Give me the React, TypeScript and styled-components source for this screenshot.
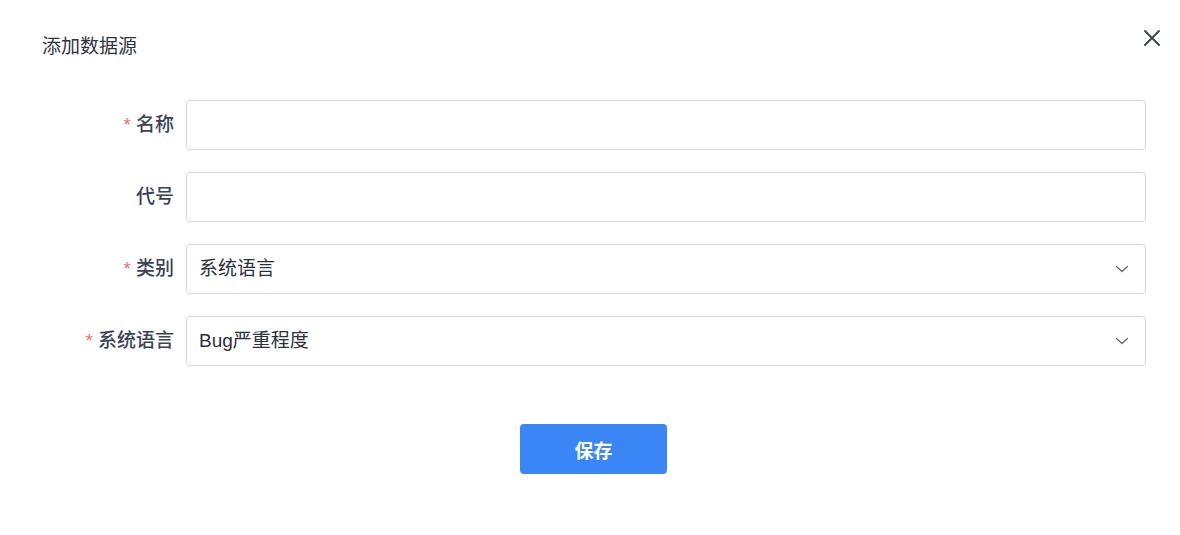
import React from 'react';
import styled, { createGlobalStyle } from 'styled-components';

const GlobalStyle = createGlobalStyle`
  html, body {
    margin: 0;
    padding: 0;
    background: #ffffff;
  }
  body {
    font-family: "Liberation Sans", "Noto Sans CJK SC", sans-serif;
  }
`;

const Dialog = styled.div`
  width: 1180px;
  height: 535px;
  box-sizing: border-box;
  background: #ffffff;
  padding: 0 20px 0 0;
`;

const Header = styled.div`
  display: flex;
  align-items: flex-start;
  justify-content: space-between;
  padding: 34px 0 0 42px;
  height: 66px;
  box-sizing: border-box;
`;

const Title = styled.h2`
  margin: 0;
  font-size: 19px;
  line-height: 26px;
  font-weight: 400;
  color: #2f3440;
`;

const CloseButton = styled.button`
  border: none;
  background: transparent;
  padding: 0;
  margin-top: -4px;
  width: 16px;
  height: 16px;
  display: flex;
  cursor: pointer;
  color: #3a3f4c;
`;

const Form = styled.form`
  display: flex;
  flex-direction: column;
  gap: 22px;
  padding: 34px 14px 0 0;
`;

const Row = styled.div`
  display: flex;
  align-items: center;
`;

const Label = styled.label`
  width: 186px;
  box-sizing: border-box;
  padding-right: 12px;
  text-align: right;
  font-size: 19px;
  line-height: 26px;
  font-weight: 500;
  color: #3c4257;
  flex-shrink: 0;
`;

const Required = styled.span`
  color: #f56c6c;
  font-size: 19px;
  margin-right: 5px;
`;

const Field = styled.div`
  flex: 1;
  height: 50px;
  box-sizing: border-box;
  border: 1px solid #d5d8e4;
  border-radius: 4px;
  display: flex;
  align-items: center;
  padding: 0 16px 0 12px;
  background: #ffffff;
`;

const TextInput = styled.input`
  flex: 1;
  border: none;
  outline: none;
  background: transparent;
  font-family: inherit;
  font-size: 19px;
  color: #303133;
  padding: 0;
`;

const SelectValue = styled.span`
  flex: 1;
  font-size: 19px;
  line-height: 26px;
  color: #2c303b;
`;

const Chevron = styled.svg`
  width: 14px;
  height: 14px;
  color: #606470;
  flex-shrink: 0;
`;

const Footer = styled.div`
  display: flex;
  justify-content: center;
  padding: 58px 0 0 27px;
`;

const SaveButton = styled.button`
  width: 147px;
  height: 50px;
  border: none;
  border-radius: 4px;
  background: #3b86f7;
  color: #ffffff;
  font-family: inherit;
  font-size: 19px;
  font-weight: 700;
  cursor: pointer;
`;

const ChevronDown = () => (
  <Chevron viewBox="0 0 14 14" fill="none">
    <path d="M1.5 4.5 L7 9.5 L12.5 4.5" stroke="currentColor" strokeWidth="1.2" strokeLinejoin="round" strokeLinecap="round" />
  </Chevron>
);

interface FormRowProps {
  label: string;
  required?: boolean;
  select?: string;
}

const FormRow: React.FC<FormRowProps> = ({ label, required, select }) => (
  <Row>
    <Label>
      {required && <Required>*</Required>}
      {label}
    </Label>
    <Field>
      {select !== undefined ? (
        <>
          <SelectValue>{select}</SelectValue>
          <ChevronDown />
        </>
      ) : (
        <TextInput type="text" />
      )}
    </Field>
  </Row>
);

const App: React.FC = () => {
  return (
    <>
      <GlobalStyle />
      <Dialog>
        <Header>
          <Title>添加数据源</Title>
          <CloseButton aria-label="关闭">
            <svg width="16" height="16" viewBox="0 0 16 16" fill="none">
              <path d="M1 1 L15 15 M15 1 L1 15" stroke="currentColor" strokeWidth="1.8" strokeLinecap="round" />
            </svg>
          </CloseButton>
        </Header>
        <Form onSubmit={(e) => e.preventDefault()}>
          <FormRow label="名称" required />
          <FormRow label="代号" />
          <FormRow label="类别" required select="系统语言" />
          <FormRow label="系统语言" required select="Bug严重程度" />
        </Form>
        <Footer>
          <SaveButton type="button">保存</SaveButton>
        </Footer>
      </Dialog>
    </>
  );
};

export default App;
